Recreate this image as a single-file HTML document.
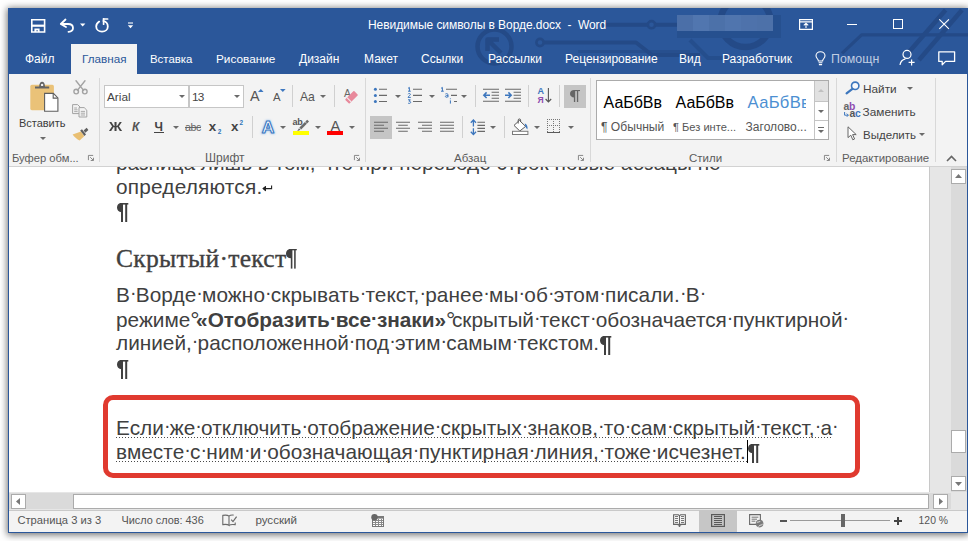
<!DOCTYPE html>
<html lang="ru">
<head>
<meta charset="utf-8">
<title>Word</title>
<style>
html,body{margin:0;padding:0;}
body{width:968px;height:541px;overflow:hidden;background:#fff;position:relative;font-family:"Liberation Sans",sans-serif;font-size:12px;color:#444;}
.abs,#win *{position:absolute;box-sizing:border-box;}
#win{position:absolute;left:8px;top:8px;width:960px;height:525px;background:#f3f3f3;box-shadow:0 1px 7px 1px rgba(0,0,0,.55);overflow:hidden;}
#blue{left:0;top:0;width:960px;height:66px;background:#2b579a;}
.t{white-space:nowrap;line-height:14px;height:14px;}
.w{color:#fff;}
svg{overflow:visible;}
</style>
</head>
<body>
<div id="win">
<div id="o" style="left:-8px;top:-8px;width:968px;height:541px;">
<div id="blue" style="left:8px;top:8px;"></div>
<!-- background circuit decoration -->
<svg style="left:8px;top:8px;overflow:hidden;" width="960" height="66" viewBox="8 8 960 66">
<g fill="none" stroke="#244a87" stroke-width="4" stroke-linecap="butt" stroke-linejoin="round">
<circle cx="494.5" cy="46.5" r="17" stroke-width="4.5"/>
<path d="M501 53 L488 40 M487.5 51 V39.5 H499" stroke-width="4.5"/>
<circle cx="540" cy="42.5" r="3.6" stroke-width="2.6"/>
<path d="M544 42.5 H636 L652 55 H700"/>
<path d="M578 51.5 H690" stroke-width="3" opacity=".6"/>
<circle cx="651.5" cy="24.7" r="3.6" stroke-width="2.6"/>
<path d="M600 24.7 H647.5 M655.5 24.7 H680"/>
<circle cx="745.5" cy="22" r="25" stroke-width="6.5"/>
<path d="M690 40 L708 58 H730" stroke-width="4" opacity=".7"/>
<path d="M842 53.4 L861.6 34.8 H968" stroke-width="3.2"/>
<path d="M945.6 10 L909 52 M962 10 L919 60" stroke-width="4.5"/>
</g>
</svg>
<!-- QAT icons -->
<svg style="left:31px;top:19px;" width="15" height="14" viewBox="0 0 15 14"><path d="M.8 .8 H13.6 V13 H.8 Z" fill="none" stroke="#fff" stroke-width="1.6"/><path d="M.8 6.7 H13.6" stroke="#fff" stroke-width="2.2"/><path d="M3.4 9.6 H8.6 V13 H6.8 V11.2 H5.4 V13 H3.4 Z" fill="#fff"/></svg>
<svg style="left:59px;top:18px;" width="16" height="15" viewBox="0 0 16 15"><path d="M6.5 1.5 L1.8 6 L7 9" fill="none" stroke="#fff" stroke-width="1.8" stroke-linecap="round" stroke-linejoin="round"/><path d="M2.5 6 H9 C12.5 6 14 8 14 10 C14 12 12.5 13.6 9.5 13.8" fill="none" stroke="#fff" stroke-width="1.8" stroke-linecap="round"/></svg>
<svg style="left:80px;top:23px;" width="6" height="4" viewBox="0 0 6 4"><path d="M0 0.5 H5.4 L2.7 3.4 Z" fill="#fff"/></svg>
<svg style="left:95px;top:18px;" width="15" height="15" viewBox="0 0 15 15"><path d="M4.2 3.6 C2.2 5 1.2 6.6 1.2 8.4 C1.2 11.4 3.8 13.6 7 13.6 C10.4 13.6 12.8 11.4 12.8 8.4 C12.8 5.4 10.8 3.6 8.4 3" fill="none" stroke="#fff" stroke-width="1.8" stroke-linecap="round"/><path d="M8.6 0.8 V6.2" fill="none" stroke="#fff" stroke-width="1.7" stroke-linecap="round"/><path d="M8.6 1 H12.6" fill="none" stroke="#fff" stroke-width="1.7" stroke-linecap="round"/></svg>
<svg style="left:127px;top:22px;" width="7" height="7" viewBox="0 0 7 7"><path d="M1 1 H6" stroke="#fff" stroke-width="1.1"/><path d="M0.8 3.2 H6.2 L3.5 6.2 Z" fill="#fff"/></svg>
<!-- title -->
<div class="t w" style="left:368px;top:18px;font-size:12px;letter-spacing:-0.06px;">Невидимые символы в Ворде.docx &nbsp;-&nbsp; Word</div>
<!-- blurred user -->
<div style="left:677px;top:31px;width:104px;height:7px;background:#26508f;"></div>
<div style="left:773px;top:15px;width:8px;height:23px;background:#26508f;"></div>
<div style="left:677px;top:15px;width:96px;height:16px;background:linear-gradient(90deg,#4b6fa8 0,#4b6fa8 16px,#5176af 16px,#5176af 32px,#4c71a9 32px,#4c71a9 48px,#5075ae 48px,#5075ae 64px,#4e72ab 64px,#4e72ab 80px,#4d71a9 80px,#4d71a9 96px);"></div>
<!-- window buttons -->
<svg style="left:799px;top:19px;" width="14" height="11" viewBox="0 0 14 11"><path d="M.6 .6 H13.4 V10.4 H.6 Z M.6 2.8 H13.4" fill="none" stroke="#fff" stroke-width="1.2"/><path d="M7 9 V4.4 M4.8 6.4 L7 4.2 L9.2 6.4" fill="none" stroke="#fff" stroke-width="1.1"/></svg>
<div style="left:847px;top:24px;width:10px;height:1px;background:#fff;"></div>
<div style="left:893px;top:19px;width:10px;height:10px;border:1px solid #fff;"></div>
<svg style="left:939px;top:19px;" width="10" height="10" viewBox="0 0 10 10"><path d="M.3 .3 L9.9 9.9 M9.9 .3 L.3 9.9" stroke="#fff" stroke-width="1.1"/></svg>
<!-- tabs -->
<div style="left:71px;top:44px;width:66px;height:31px;background:#f3f3f3;"></div>
<div class="t w" style="left:25px;top:52px;">Файл</div>
<div class="t" style="left:82px;top:52px;color:#2b579a;font-size:11.7px;">Главная</div>
<div class="t w" style="left:150px;top:52px;font-size:11.4px;">Вставка</div>
<div class="t w" style="left:216px;top:52px;font-size:11.8px;">Рисование</div>
<div class="t w" style="left:299px;top:52px;">Дизайн</div>
<div class="t w" style="left:364px;top:52px;">Макет</div>
<div class="t w" style="left:421px;top:52px;">Ссылки</div>
<div class="t w" style="left:488px;top:52px;">Рассылки</div>
<div class="t w" style="left:565px;top:52px;">Рецензирование</div>
<div class="t w" style="left:679px;top:52px;">Вид</div>
<div class="t w" style="left:722px;top:52px;">Разработчик</div>
<svg style="left:815px;top:51px;" width="11" height="15" viewBox="0 0 11 15"><path d="M3.4 10 C3.4 8 1 7.4 1 4.8 C1 2.4 3 .7 5.5 .7 C8 .7 10 2.4 10 4.8 C10 7.4 7.6 8 7.6 10 Z" fill="none" stroke="#fff" stroke-width="1.1"/><path d="M3.6 11.8 H7.4 M3.9 13.6 H7.1" stroke="#fff" stroke-width="1.1"/></svg>
<div class="t" style="left:831px;top:52px;color:#c0cde2;font-size:12.4px;">Помощн</div>
<svg style="left:899px;top:49px;" width="17" height="17" viewBox="0 0 17 17"><circle cx="8" cy="5.4" r="4" fill="none" stroke="#fff" stroke-width="1.2"/><path d="M1 16 C1.4 12.6 3.4 10.6 6.4 9.8" fill="none" stroke="#fff" stroke-width="1.2"/><path d="M9.6 13.4 H15.6 M12.6 10.4 V16.4" stroke="#fff" stroke-width="1.2"/></svg>
<svg style="left:938px;top:51px;" width="18" height="15" viewBox="0 0 18 15"><path d="M.8 .8 H16.6 V10.4 H7.6 L4.2 13.8 V10.4 H.8 Z" fill="none" stroke="#fff" stroke-width="1.3" stroke-linejoin="round"/></svg>
<!-- ribbon -->
<div style="left:9px;top:166px;width:958px;height:1px;background:#d2d2d2;"></div>
<style>
.sep{width:1px;background:#d8d8d8;}
.g{color:#5c5c5c;font-size:11.5px;}
.dd{width:0;height:0;border-left:3px solid transparent;border-right:3px solid transparent;border-top:3px solid #6a6a6a;}
.ln{width:6px;height:6px;}
</style>
<!-- group separators -->
<div class="sep" style="left:99px;top:78px;height:84px;"></div>
<div class="sep" style="left:365px;top:78px;height:84px;"></div>
<div class="sep" style="left:590px;top:78px;height:84px;"></div>
<div class="sep" style="left:836px;top:78px;height:84px;"></div>
<div class="sep" style="left:935px;top:78px;height:84px;"></div>
<!-- group labels -->
<div class="t g" style="left:12px;top:151px;font-size:11.2px;">Буфер обм...</div>
<div class="t g" style="left:205px;top:151px;font-size:12px;">Шрифт</div>
<div class="t g" style="left:454px;top:151px;">Абзац</div>
<div class="t g" style="left:689px;top:151px;">Стили</div>
<div class="t g" style="left:842px;top:151px;font-size:11.45px;">Редактирование</div>
<!-- launchers -->
<svg class="ln" style="left:88px;top:155px;" width="7" height="7" viewBox="0 0 7 7"><path d="M.5 6 V.5 H6" fill="none" stroke="#777" stroke-width="1"/><path d="M2.6 2.6 L6 6 M6.4 3.2 V6.4 H3.2" fill="none" stroke="#777" stroke-width="1"/></svg>
<svg class="ln" style="left:354px;top:155px;" width="7" height="7" viewBox="0 0 7 7"><path d="M.5 6 V.5 H6" fill="none" stroke="#777" stroke-width="1"/><path d="M2.6 2.6 L6 6 M6.4 3.2 V6.4 H3.2" fill="none" stroke="#777" stroke-width="1"/></svg>
<svg class="ln" style="left:578px;top:155px;" width="7" height="7" viewBox="0 0 7 7"><path d="M.5 6 V.5 H6" fill="none" stroke="#777" stroke-width="1"/><path d="M2.6 2.6 L6 6 M6.4 3.2 V6.4 H3.2" fill="none" stroke="#777" stroke-width="1"/></svg>
<svg class="ln" style="left:824px;top:155px;" width="7" height="7" viewBox="0 0 7 7"><path d="M.5 6 V.5 H6" fill="none" stroke="#777" stroke-width="1"/><path d="M2.6 2.6 L6 6 M6.4 3.2 V6.4 H3.2" fill="none" stroke="#777" stroke-width="1"/></svg>
<!-- collapse -->
<svg style="left:946px;top:155px;" width="11" height="7" viewBox="0 0 11 7"><path d="M1 6 L5.5 1.5 L10 6" fill="none" stroke="#666" stroke-width="1.6"/></svg>
<!-- clipboard group -->
<svg style="left:30px;top:81px;" width="29" height="31" viewBox="0 0 29 31">
<rect x=".3" y="3.8" width="23.6" height="25.4" rx="1.6" fill="#eac278"/>
<path d="M5 7.6 V5.4 H9.2 C9.2 2.6 10.4 .8 12.1 .8 C13.8 .8 15 2.6 15 5.4 H19.2 V7.6 Z" fill="#646464"/>
<circle cx="12.1" cy="3.9" r="1.2" fill="#f3f3f3"/>
<path d="M14.6 12.4 H23.4 L27.9 16.9 V30.3 H14.6 Z" fill="#fff" stroke="#5e5e5e" stroke-width="1.1"/>
<path d="M23.2 12.6 V17.1 H27.7" fill="none" stroke="#5e5e5e" stroke-width="1.1"/>
</svg>
<div class="t" style="left:19px;top:116px;font-size:11px;color:#3c3c3c;letter-spacing:-0.02px;">Вставить</div>
<div class="dd" style="left:40px;top:137px;"></div>
<!-- scissors -->
<svg style="left:73px;top:80px;" width="15" height="15" viewBox="0 0 15 15"><g fill="none" stroke="#a3a3a3" stroke-width="1.4" stroke-linecap="round"><path d="M3 .8 L10.6 10.4 M12 .8 L4.4 10.4"/><circle cx="3.2" cy="11.6" r="2.3"/><circle cx="11.8" cy="11.6" r="2.3"/></g></svg>
<!-- copy -->
<svg style="left:72px;top:104px;" width="16" height="14" viewBox="0 0 16 14"><g fill="#f3f3f3" stroke="#a3a3a3" stroke-width="1"><path d="M.6 .6 H5.6 L8.2 3.2 V9.6 H.6 Z"/><path d="M7 3.6 H12.2 L14.8 6.2 V13 H7 Z"/></g><g stroke="#a3a3a3" stroke-width=".9"><path d="M2.2 4 H5 M2.2 5.8 H5.6 M2.2 7.6 H5.6 M8.8 7.4 H13 M8.8 9.2 H13 M8.8 11 H13"/></g></svg>
<!-- format painter -->
<svg style="left:72px;top:127px;" width="17" height="14" viewBox="0 0 17 14"><path d="M.6 7.6 L9 4.4 L12.2 9.2 L7.6 13.6 C5 12.4 2.6 10.4 .6 7.6 Z" fill="#e9bf72"/><path d="M8.2 3.6 L10 2.2 L14 7.6 L12.4 9 Z" fill="#5f5f5f"/><path d="M11.6 3.4 L14.6 .8 L16.4 3 L13.4 5.8 Z" fill="#5f5f5f"/></svg>

<!-- font group -->
<div style="left:104px;top:85px;width:85px;height:23px;background:#fff;border:1px solid #c6c6c6;"></div>
<div style="left:189px;top:85px;width:55px;height:23px;background:#fff;border:1px solid #c6c6c6;"></div>
<div class="t" style="left:107px;top:90px;font-size:11.8px;color:#444;">Arial</div>
<div class="t" style="left:192px;top:90px;font-size:11.8px;color:#444;letter-spacing:-0.9px;">13</div>
<div class="dd" style="left:179px;top:95px;"></div>
<div class="dd" style="left:234px;top:95px;"></div>
<!-- grow/shrink -->
<div class="t" style="left:250px;top:88px;font-size:14.4px;line-height:16px;height:16px;color:#555;">A</div>
<svg style="left:258px;top:89px;" width="6" height="3" viewBox="0 0 6 3"><path d="M0 3 L2.8 0 L5.6 3 Z" fill="#3e78c0"/></svg>
<div class="t" style="left:273px;top:90px;font-size:11.4px;color:#555;">A</div>
<svg style="left:279.6px;top:89px;" width="6" height="3" viewBox="0 0 6 3"><path d="M0 0 H5.6 L2.8 3 Z" fill="#3e78c0"/></svg>
<div class="sep" style="left:292px;top:85px;height:22px;background:#d0d0d0;"></div>
<div class="t" style="left:300px;top:90px;font-size:12.2px;color:#555;letter-spacing:-0.2px;">Aa</div>
<div class="dd" style="left:320px;top:95px;"></div>
<div class="sep" style="left:334px;top:85px;height:22px;background:#d0d0d0;"></div>
<!-- clear formatting -->
<div class="t" style="left:344px;top:87.6px;font-size:10.2px;line-height:11px;height:11px;color:#666;">A</div>
<svg style="left:345px;top:91px;" width="14" height="13" viewBox="0 0 14 13"><g transform="rotate(-45 6.5 6.5)"><rect x=".4" y="3.4" width="12.6" height="6" rx=".8" fill="#e8899b"/><rect x="2.7" y="3.4" width="1" height="6" fill="#f3f3f3"/></g></svg>
<!-- row 2 -->
<div class="t" style="left:108.5px;top:120px;font-size:12px;font-weight:700;color:#444;transform:scaleX(1.2);transform-origin:0 0;">Ж</div>
<div class="t" style="left:132px;top:120px;font-size:12px;font-weight:700;font-style:italic;color:#555;">К</div>
<div class="t" style="left:154.5px;top:120px;font-size:12px;font-weight:700;color:#444;">Ч</div>
<div style="left:154px;top:132px;width:10px;height:1px;background:#444;"></div>
<div class="dd" style="left:173px;top:126px;"></div>
<div class="t" style="left:185px;top:120px;font-size:10.6px;color:#666;letter-spacing:-0.4px;">abc</div>
<div style="left:185px;top:127px;width:16px;height:1px;background:#666;"></div>
<div class="t" style="left:208.8px;top:119px;font-size:13.4px;line-height:16px;height:16px;font-weight:700;color:#444;">x</div>
<div class="t" style="left:217.8px;top:128px;font-size:6.4px;line-height:8px;height:8px;font-weight:700;color:#2e74b8;">2</div>
<div class="t" style="left:231px;top:119px;font-size:13.4px;line-height:16px;height:16px;font-weight:700;color:#444;">x</div>
<div class="t" style="left:239.6px;top:119.4px;font-size:6.4px;line-height:8px;height:8px;font-weight:700;color:#2e74b8;">2</div>
<div class="sep" style="left:252px;top:116px;height:22px;background:#d0d0d0;"></div>
<!-- text effects -->
<svg style="left:259px;top:117px;" width="18" height="18" viewBox="0 0 18 18"><defs><filter id="gl" x="-30%" y="-30%" width="160%" height="160%"><feGaussianBlur stdDeviation=".8"/></filter></defs><text x="9" y="15.7" text-anchor="middle" font-family="Liberation Sans" font-weight="700" font-size="17.4" fill="#a9c8ec" stroke="#a9c8ec" stroke-width="2" filter="url(#gl)">A</text><text x="9" y="15.7" text-anchor="middle" font-family="Liberation Sans" font-weight="700" font-size="17.4" fill="#fff" stroke="#3a78c2" stroke-width="1.1" stroke-linejoin="round">A</text></svg>
<div class="dd" style="left:280px;top:126px;"></div>
<!-- highlight -->
<div class="t" style="left:292.6px;top:116.6px;font-size:9px;line-height:11px;height:11px;color:#555;font-weight:700;letter-spacing:-0.3px;">ab</div>
<svg style="left:295px;top:119px;" width="15" height="13" viewBox="0 0 15 13"><path d="M12.2 .8 L14 2.6 L6.2 10.4 L4.4 8.6 Z" fill="#6b6b6b"/><path d="M4 9.2 L5.6 10.8 L2.2 12.2 Z" fill="#6b6b6b"/><path d="M9.4 2 L11.6 4.2" stroke="#f3f3f3" stroke-width=".8"/></svg>
<div style="left:293px;top:131px;width:16px;height:4px;background:#ffff00;"></div>
<div class="dd" style="left:315px;top:126px;"></div>
<!-- font color -->
<div class="t" style="left:330.4px;top:117.6px;font-size:14.6px;line-height:16px;height:16px;color:#555;">A</div>
<div style="left:327px;top:131px;width:16px;height:4px;background:#fe0000;"></div>
<div class="dd" style="left:349px;top:126px;"></div>

<!-- paragraph group -->
<svg style="left:373px;top:87px;" width="16" height="17" viewBox="0 0 16 17"><g fill="#3c76bd"><circle cx="2.4" cy="2.3" r="1.5"/><circle cx="2.4" cy="8.4" r="1.5"/><circle cx="2.4" cy="14.5" r="1.5"/></g><path d="M6 2.3 H14 M6 8.4 H14 M6 14.5 H14" stroke="#6a6a6a" stroke-width="1.1"/></svg>
<div class="dd" style="left:395px;top:95px;"></div>
<svg style="left:407px;top:87px;" width="16" height="17" viewBox="0 0 16 17"><path d="M6 2.3 H15 M6 8.4 H15 M6 14.5 H15" stroke="#6a6a6a" stroke-width="1.1"/><g fill="none" stroke="#3c76bd" stroke-width="1"><path d="M1 1.4 L2.4 .4 V4.2 M1 4.2 H3.8"/><path d="M1 7.2 C1.4 6.2 3.4 6.2 3.4 7.4 C3.4 8.4 1.2 9.2 1 10.4 H3.8"/><path d="M1 12.8 H3.4 L2 14.2 C3.4 14.2 3.8 15 3.6 15.6 C3.4 16.6 1.8 16.6 1 16"/></g></svg>
<div class="dd" style="left:429px;top:95px;"></div>
<svg style="left:440px;top:87px;" width="18" height="17" viewBox="0 0 18 17"><path d="M6 2.3 H17 M11 8.4 H17 M14 14.5 H17" stroke="#6a6a6a" stroke-width="1.1"/><g fill="none" stroke="#3c76bd" stroke-width="1"><path d="M1 1.4 L2.4 .4 V4.2 M1 4.2 H3.8"/><path d="M5.4 7 C7 6.2 8 6.8 8 8 V10.2 M8 8.6 C6 8.4 5.2 9 5.4 9.6 C5.6 10.6 7.4 10.4 8 9.4"/><path d="M10.4 13.4 V16.6 M10.4 11.4 V12.2"/></g></svg>
<div class="dd" style="left:461px;top:95px;"></div>
<div class="sep" style="left:475px;top:85px;height:22px;background:#d0d0d0;"></div>
<!-- indents -->
<svg style="left:483px;top:88px;" width="16" height="14" viewBox="0 0 16 14"><path d="M0 1.2 H16 M8.6 4.2 H16 M8.6 7.2 H16 M8.6 10.2 H16 M0 13.2 H16" stroke="#6a6a6a" stroke-width="1.1"/><path d="M7 7.2 H1 M3.6 4.4 L.8 7.2 L3.6 10" fill="none" stroke="#3c76bd" stroke-width="1.5"/></svg>
<svg style="left:505px;top:88px;" width="16" height="14" viewBox="0 0 16 14"><path d="M0 1.2 H16 M8.6 4.2 H16 M8.6 7.2 H16 M8.6 10.2 H16 M0 13.2 H16" stroke="#6a6a6a" stroke-width="1.1"/><path d="M0 7.2 H6 M3.4 4.4 L6.2 7.2 L3.4 10" fill="none" stroke="#3c76bd" stroke-width="1.5"/></svg>
<div class="sep" style="left:528px;top:85px;height:22px;background:#d0d0d0;"></div>
<!-- sort -->
<div class="t" style="left:537.4px;top:86.4px;font-size:9px;line-height:10px;height:10px;font-weight:700;color:#3c76bd;">А</div>
<div class="t" style="left:537.6px;top:94.8px;font-size:8.6px;line-height:10px;height:10px;font-weight:700;color:#8e4bb0;">Я</div>
<svg style="left:545px;top:88px;" width="7" height="15" viewBox="0 0 7 15"><path d="M3.4 0 V14 M.6 11 L3.4 14 L6.2 11" fill="none" stroke="#555" stroke-width="1.1"/></svg>
<div class="sep" style="left:559px;top:85px;height:22px;background:#d0d0d0;"></div>
<!-- pilcrow -->
<div style="left:564px;top:85px;width:22px;height:23px;background:#c5c5c5;"></div>
<svg style="left:570px;top:90px;" width="10" height="12" viewBox="0 0 10 12"><g fill="#666"><path d="M4.4 0 C1.4 0 0 1.7 0 3.7 C0 5.7 1.4 7.4 4.4 7.4 Z"/><rect x="3.9" y="0" width="1.3" height="12"/><rect x="6.9" y="0" width="1.3" height="12"/><rect x="3.9" y="0" width="6.1" height="1.1"/></g></svg>
<!-- row 2: align -->
<div style="left:370px;top:116px;width:22px;height:23px;background:#c5c5c5;"></div>
<svg style="left:374px;top:121px;" width="14" height="11" viewBox="0 0 14 11"><path d="M0 1.2 H14 M0 4.2 H10 M0 7.2 H14 M0 10.2 H10" stroke="#6a6a6a" stroke-width="1.1"/></svg>
<svg style="left:396px;top:121px;" width="14" height="11" viewBox="0 0 14 11"><path d="M0 1.2 H14 M2.2 4.2 H11.8 M0 7.2 H14 M2.2 10.2 H11.8" stroke="#6a6a6a" stroke-width="1.1"/></svg>
<svg style="left:418px;top:121px;" width="14" height="11" viewBox="0 0 14 11"><path d="M0 1.2 H14 M4 4.2 H14 M0 7.2 H14 M4 10.2 H14" stroke="#6a6a6a" stroke-width="1.1"/></svg>
<svg style="left:440px;top:121px;" width="14" height="11" viewBox="0 0 14 11"><path d="M0 1.2 H14 M0 4.2 H14 M0 7.2 H14 M0 10.2 H14" stroke="#6a6a6a" stroke-width="1.1"/></svg>
<div class="sep" style="left:462px;top:116px;height:22px;background:#d0d0d0;"></div>
<!-- line spacing -->
<svg style="left:470px;top:119px;" width="16" height="17" viewBox="0 0 16 17"><path d="M7.4 3.3 H15 M7.4 6.4 H15 M7.4 9.4 H15 M7.4 12.4 H15" stroke="#6a6a6a" stroke-width="1.1"/><path d="M3.4 1 V7.4 M3.4 9.2 V15.6 M.8 3.8 L3.4 1 L6 3.8 M.8 12.8 L3.4 15.6 L6 12.8" fill="none" stroke="#3c76bd" stroke-width="1.3"/></svg>
<div class="dd" style="left:490px;top:126px;"></div>
<div class="sep" style="left:504px;top:116px;height:22px;background:#d0d0d0;"></div>
<!-- shading -->
<svg style="left:512px;top:118px;" width="17" height="17" viewBox="0 0 17 17"><path d="M7.4 2.4 L13.6 8.4 L7.8 13 L2 7.4 Z" fill="#fff" stroke="#5a5a5a" stroke-width="1"/><path d="M6.2 5.6 V2 C6.2 .6 8.6 .6 8.6 2 V4" fill="none" stroke="#5a5a5a" stroke-width="1"/><path d="M12.8 5.6 C15 6.4 16 8.6 15.4 11.6 C14.4 10.4 13.8 9.4 13.4 8.4 Z" fill="#3c76bd"/><rect x=".5" y="13.3" width="15.4" height="3.2" fill="#fff" stroke="#7a7a7a" stroke-width="1"/></svg>
<div class="dd" style="left:534px;top:126px;"></div>
<!-- borders -->
<svg style="left:547px;top:119px;" width="14" height="14" viewBox="0 0 14 14" shape-rendering="crispEdges"><path d="M0 .5 H13 M0 6.5 H13" stroke="#777" stroke-width="1" stroke-dasharray="1 1"/><path d="M.5 0 V13 M6.5 0 V13 M12.5 0 V13" stroke="#777" stroke-width="1" stroke-dasharray="1 1"/><path d="M0 13.5 H13" stroke="#5a5a5a" stroke-width="1"/></svg>
<div class="dd" style="left:568px;top:126px;"></div>

<!-- styles gallery -->
<div style="left:596px;top:80px;width:233px;height:60px;background:#fff;border:1px solid #ababab;"></div>
<div style="left:814px;top:81px;width:14px;height:20px;background:#e1e1e1;"></div>
<div style="left:814px;top:81px;width:1px;height:58px;background:#c4c4c4;"></div>
<div style="left:815px;top:101px;width:13px;height:1px;background:#c4c4c4;"></div>
<div style="left:815px;top:120px;width:13px;height:1px;background:#c4c4c4;"></div>
<svg style="left:818px;top:89px;" width="6" height="3" viewBox="0 0 6 3"><path d="M0 3 L3 0 L6 3 Z" fill="#c0c0c0"/></svg>
<div class="dd" style="left:818px;top:110px;"></div>
<div style="left:818px;top:127px;width:6px;height:1px;background:#6a6a6a;"></div>
<div class="dd" style="left:818px;top:130px;"></div>
<div class="t" style="left:603.6px;top:93px;font-size:16px;line-height:20px;height:20px;color:#000;letter-spacing:-0.06px;">АаБбВв</div>
<div class="t" style="left:675.6px;top:93px;font-size:16px;line-height:20px;height:20px;color:#000;letter-spacing:-0.06px;">АаБбВв</div>
<div style="left:746px;top:90px;width:60px;height:24px;overflow:hidden;"><div class="t" style="left:1.6px;top:2.6px;font-size:16.6px;line-height:20px;height:20px;color:#4c8fd2;letter-spacing:0.3px;">АаБбВв</div></div>
<div class="t" style="left:601px;top:120px;font-size:12.1px;color:#555;">¶ Обычный</div>
<div class="t" style="left:673px;top:120px;font-size:11.1px;color:#555;">¶ Без инте...</div>
<div class="t" style="left:745.6px;top:120px;font-size:12px;color:#555;">Заголово...</div>

<!-- editing group -->
<svg style="left:845px;top:81px;" width="15" height="14" viewBox="0 0 15 14"><circle cx="10.2" cy="4.8" r="3.7" fill="#f7f9fc" stroke="#3c76bd" stroke-width="1.6"/><path d="M7.4 7.8 L1.6 12.4" stroke="#3c76bd" stroke-width="2.2" stroke-linecap="round"/></svg>
<div class="t" style="left:863px;top:82px;font-size:11.8px;color:#444;">Найти</div>
<div class="dd" style="left:907px;top:87px;"></div>
<div class="t" style="left:843.4px;top:100.6px;font-size:10.4px;line-height:12px;height:12px;color:#666;font-weight:700;letter-spacing:-0.3px;">a<span style="position:static !important;color:#8e4bb0;">b</span></div>
<div class="t" style="left:849.4px;top:108.2px;font-size:10.4px;line-height:12px;height:12px;color:#555;font-weight:700;letter-spacing:-0.3px;">a<span style="position:static !important;color:#3c76bd;">c</span></div>
<svg style="left:844px;top:112px;" width="5" height="6" viewBox="0 0 5 6"><path d="M.6 0 V3.2 H4.2 M2.8 1.6 L4.4 3.2 L2.8 4.8" fill="none" stroke="#3c76bd" stroke-width="1"/></svg>
<div class="t" style="left:862.6px;top:105px;font-size:11.8px;color:#444;">Заменить</div>
<svg style="left:847px;top:126px;" width="11" height="15" viewBox="0 0 11 15"><path d="M1 .8 V11.6 L3.8 9.2 L5.8 13.8 L7.6 13 L5.6 8.6 H9.2 Z" fill="#fff" stroke="#666" stroke-width="1" stroke-linejoin="round"/></svg>
<div class="t" style="left:863px;top:127.6px;font-size:11.5px;color:#444;">Выделить</div>
<div class="dd" style="left:919px;top:133px;"></div>

<!-- document -->
<style>
.pg{left:9px;top:167px;width:921px;height:325px;background:#fff;overflow:hidden;}
.l{white-space:nowrap;font-size:20.8px;line-height:24px;height:24px;color:#404040;left:107px;}
#win .l i{position:relative;top:-3.3px;font-style:normal;font-size:0.95em;letter-spacing:-0.0405em;font-weight:400;}
#win .l b{position:static;font-weight:700;}
#win .l b i{font-weight:700;top:-2.2px;}
#win .l u{position:relative;top:1px;text-decoration:none;font-size:1.12em;letter-spacing:-0.152em;}
.pm{fill:#404040;}
.h{white-space:nowrap;font-family:"Liberation Serif",serif;font-size:25.6px;line-height:30px;height:30px;color:#404040;left:107px;letter-spacing:0.26px;-webkit-text-stroke:0.35px #404040;}
#win .h i{position:static;font-style:normal;}
</style>
<div class="pg">
<div class="l" style="top:-16.2px;">разница<i>·</i>лишь<i>·</i>в<i>·</i>том,<i>·</i>что<i>·</i>при<i>·</i>переводе<i>·</i>строк<i>·</i>новые<i>·</i>абзацы<i>·</i>не<i>·</i></div>
<div class="l" style="top:7.8px;letter-spacing:0.2px;">определяются.</div>
<svg style="left:253px;top:18px;" width="11" height="7" viewBox="0 0 11 7"><path d="M9.6 .4 V3.6 H2 M3.8 1.4 L1.2 3.6 L3.8 5.8" fill="none" stroke="#222" stroke-width="1.1"/><path d="M4 1 L.6 3.6 L4 6.2 Z" fill="#222"/></svg>

<div class="h" style="top:76.6px;">Скрытый<i>·</i>текст</div>
<div class="l" style="top:116.3px;letter-spacing:0.068px;">В<i>·</i>Ворде<i>·</i>можно<i>·</i>скрывать<i>·</i>текст,<i>·</i>ранее<i>·</i>мы<i>·</i>об<i>·</i>этом<i>·</i>писали.<i>·</i>В<i>·</i></div>
<div class="l" style="top:140.2px;">режиме<u>°</u><b>«Отобразить<i>·</i>все<i>·</i>знаки»</b><u>°</u>скрытый<i>·</i>текст<i>·</i>обозначается<i>·</i>пунктирной<i>·</i></div>
<div class="l" style="top:164.3px;">линией,<i>·</i>расположенной<i>·</i>под<i>·</i>этим<i>·</i>самым<i>·</i>текстом.</div>

<svg class="pm" style="left:107.6px;top:36px;" width="12" height="19" viewBox="0 0 12 19"><path d="M4.6 0 C1.5 0 0 2 0 4.6 C0 7.2 1.5 9.2 4.6 9.2 Z"/><rect x="4" y="0" width="2" height="19"/><rect x="8.2" y="0" width="2" height="19"/><rect x="3" y="0" width="8.3" height="1.6"/></svg>
<svg class="pm" style="left:277.2px;top:82.2px;" width="12" height="20" viewBox="0 0 12 20"><path d="M5 0 C1.6 0 0 2 0 4.6 C0 7.2 1.6 9.2 5 9.2 Z"/><rect x="4.8" y="0" width="1.6" height="19.6"/><rect x="8" y="0" width="1.8" height="19.6" fill="#5a5a5a"/><rect x="3" y="0" width="7.8" height="1.3"/></svg>
<svg class="pm" style="left:591.1px;top:169px;" width="12" height="19" viewBox="0 0 12 19"><path d="M4.6 0 C1.5 0 0 2 0 4.6 C0 7.2 1.5 9.2 4.6 9.2 Z"/><rect x="4" y="0" width="2" height="19"/><rect x="8.2" y="0" width="2" height="19"/><rect x="3" y="0" width="8.3" height="1.6"/></svg>
<svg class="pm" style="left:107.6px;top:193px;" width="12" height="19" viewBox="0 0 12 19"><path d="M4.6 0 C1.5 0 0 2 0 4.6 C0 7.2 1.5 9.2 4.6 9.2 Z"/><rect x="4" y="0" width="2" height="19"/><rect x="8.2" y="0" width="2" height="19"/><rect x="3" y="0" width="8.3" height="1.6"/></svg>
<svg class="pm" style="left:739.4px;top:277px;" width="12" height="19" viewBox="0 0 12 19"><path d="M4.6 0 C1.5 0 0 2 0 4.6 C0 7.2 1.5 9.2 4.6 9.2 Z"/><rect x="4" y="0" width="2" height="19"/><rect x="8.2" y="0" width="2" height="19"/><rect x="3" y="0" width="8.3" height="1.6"/></svg>
<!-- red box -->
<div style="left:93.6px;top:228px;width:757.2px;height:83px;border:5px solid #e03a2f;border-radius:10px;"></div>
<div class="l" style="top:248.8px;letter-spacing:0.036px;">Если<i>·</i>же<i>·</i>отключить<i>·</i>отображение<i>·</i>скрытых<i>·</i>знаков,<i>·</i>то<i>·</i>сам<i>·</i>скрытый<i>·</i>текст,<i>·</i>а<i>·</i></div>
<div class="l" style="top:272.8px;letter-spacing:0.063px;">вместе<i>·</i>с<i>·</i>ним<i>·</i>и<i>·</i>обозначающая<i>·</i>пунктирная<i>·</i>линия,<i>·</i>тоже<i>·</i>исчезнет.</div>
<div style="left:107px;top:270px;width:716px;height:1px;background:repeating-linear-gradient(90deg,#4a4a4a 0,#4a4a4a 1.2px,transparent 1.2px,transparent 3px);"></div>
<div style="left:107px;top:294px;width:631px;height:1px;background:repeating-linear-gradient(90deg,#4a4a4a 0,#4a4a4a 1.2px,transparent 1.2px,transparent 3px);"></div>
<div style="left:738px;top:273px;width:1px;height:23px;background:#000;"></div>
</div>
<!-- right margin + v scrollbar -->
<div style="left:929px;top:167px;width:1px;height:325px;background:#c8c8c8;"></div>
<div style="left:930px;top:167px;width:21px;height:325px;background:#e6e6e6;"></div>
<div style="left:951px;top:167px;width:16px;height:325px;background:#dadada;"></div>
<div style="left:951px;top:169px;width:15px;height:15px;background:#fff;border:1px solid #ababab;"></div>
<svg style="left:955px;top:174px;" width="7" height="4" viewBox="0 0 7 4"><path d="M0 4 L3.5 0 L7 4 Z" fill="#777"/></svg>
<div style="left:951px;top:430px;width:15px;height:23px;background:#fff;border:1px solid #ababab;"></div>
<div style="left:951px;top:476px;width:15px;height:15px;background:#fff;border:1px solid #ababab;"></div>
<svg style="left:955px;top:482px;" width="7" height="4" viewBox="0 0 7 4"><path d="M0 0 H7 L3.5 4 Z" fill="#777"/></svg>
<!-- h scrollbar -->
<div style="left:9px;top:492px;width:958px;height:17px;background:#e6e6e6;"></div>
<div style="left:9px;top:493px;width:942px;height:16px;background:#dadada;"></div>
<div style="left:11px;top:494px;width:15px;height:15px;background:#fff;border:1px solid #ababab;"></div>
<svg style="left:16px;top:498px;" width="4" height="7" viewBox="0 0 4 7"><path d="M4 0 V7 L0 3.5 Z" fill="#777"/></svg>
<div style="left:73px;top:494px;width:856px;height:15px;background:#fff;border:1px solid #ababab;"></div>
<div style="left:933px;top:494px;width:15px;height:15px;background:#fff;border:1px solid #ababab;"></div>
<svg style="left:939px;top:498px;" width="4" height="7" viewBox="0 0 4 7"><path d="M0 0 V7 L4 3.5 Z" fill="#777"/></svg>
<!-- status bar -->
<div style="left:9px;top:509px;width:958px;height:1px;background:#e6e6e6;"></div>
<div style="left:9px;top:510px;width:958px;height:22px;background:#f3f3f3;border-top:1px solid #c9c9c9;"></div>
<div class="t" style="left:17.4px;top:513px;font-size:11.2px;color:#555;">Страница 3 из 3</div>
<div class="t" style="left:121.4px;top:513px;font-size:10.9px;color:#555;">Число слов: 436</div>
<div class="t" style="left:255.4px;top:513px;font-size:11.6px;color:#555;">русский</div>
<div class="t" style="left:918.6px;top:513.8px;font-size:10.4px;color:#555;">120 %</div>
<!-- status icons -->
<svg style="left:222px;top:514px;" width="16" height="13" viewBox="0 0 16 13"><path d="M7 2.2 V11.4 C5.6 10.2 3 10.2 .8 10.6 V1.4 C3 1 5.6 1 7 2.2 Z M7 2.2 C8 1.2 10 .9 11.6 1.1" fill="none" stroke="#6a6a6a" stroke-width="1.1"/><path d="M7 11.4 C8.2 10.4 10 10.2 13.2 10.6 V8.4" fill="none" stroke="#6a6a6a" stroke-width="1.1"/><path d="M9.2 5.6 L11 7.6 L14.6 2.6" fill="none" stroke="#6a6a6a" stroke-width="1.2"/></svg>
<svg style="left:371px;top:514px;" width="13" height="13" viewBox="0 0 13 13"><rect x="1.5" y="2.5" width="11" height="10" fill="#fff" stroke="#777" stroke-width="1"/><rect x="5" y="2" width="8" height="2.6" fill="#7a7a7a"/><path d="M2 6.5 H12 M2 8.5 H12 M2 10.5 H12 M4.5 6 V12 M7.5 5 V12 M10.5 5 V12" stroke="#8a8a8a" stroke-width="1" shape-rendering="crispEdges"/><circle cx="3.5" cy="3.3" r="3.2" fill="#666"/></svg>
<svg style="left:673px;top:514px;" width="14" height="13" viewBox="0 0 14 13"><path d="M.6 .8 H5.4 L6.5 1.8 L7.6 .8 H12.4 V10.4 H7.6 L6.5 11.4 L5.4 10.4 H.6 Z" fill="none" stroke="#666" stroke-width="1.1"/><path d="M6.5 1.8 V12.8 M5.2 11.4 L6.5 12.8 L7.8 11.4" fill="none" stroke="#666" stroke-width="1"/><path d="M2 2.5 H5 M2 4.5 H5 M2 6.5 H5 M2 8.5 H5 M8 2.5 H11 M8 4.5 H11 M8 6.5 H11 M8 8.5 H11" stroke="#777" stroke-width="1" shape-rendering="crispEdges"/></svg>
<div style="left:699px;top:510px;width:38px;height:22px;background:#c6c6c6;"></div>
<svg style="left:711px;top:514px;" width="14" height="13" viewBox="0 0 14 13"><rect x=".6" y=".6" width="12.8" height="11.8" fill="none" stroke="#5a5a5a" stroke-width="1.2"/><path d="M3 2.5 H11 M3 4.5 H11 M3 6.5 H11 M3 8.5 H11 M3 10.5 H11" stroke="#5a5a5a" stroke-width="1" shape-rendering="crispEdges"/></svg>
<svg style="left:749px;top:514px;" width="15" height="14" viewBox="0 0 15 14"><path d="M7 10.4 H.6 V.6 H11.4 V6" fill="none" stroke="#6a6a6a" stroke-width="1.1"/><path d="M2.6 3.2 H9.4 M2.6 5.2 H8 M2.6 7.2 H6.4" stroke="#6a6a6a" stroke-width=".9"/><circle cx="10.6" cy="9.6" r="3.8" fill="#7a7a7a"/><path d="M7.8 8.6 C9 7.4 10.6 8.6 11.2 7 M9.6 12.6 C10 11 12.4 11.4 13.6 10.2" fill="none" stroke="#f3f3f3" stroke-width=".9"/></svg>
<div style="left:780px;top:520px;width:7px;height:1.6px;background:#555;"></div>
<div style="left:790px;top:520px;width:100px;height:1px;background:#9a9a9a;"></div>
<div style="left:841px;top:514px;width:4px;height:13px;background:#666;"></div>
<div style="left:894px;top:520px;width:8.4px;height:2px;background:#444;"></div>
<div style="left:897.2px;top:516.8px;width:2px;height:8.4px;background:#444;"></div>

<!-- window borders -->
<div style="left:8px;top:74px;width:1px;height:459px;background:#2b579a;"></div>
<div style="left:967px;top:74px;width:1px;height:459px;background:#2b579a;"></div>
<div style="left:8px;top:532px;width:960px;height:1px;background:#2b579a;"></div>
</div>
</div>
</body>
</html>
